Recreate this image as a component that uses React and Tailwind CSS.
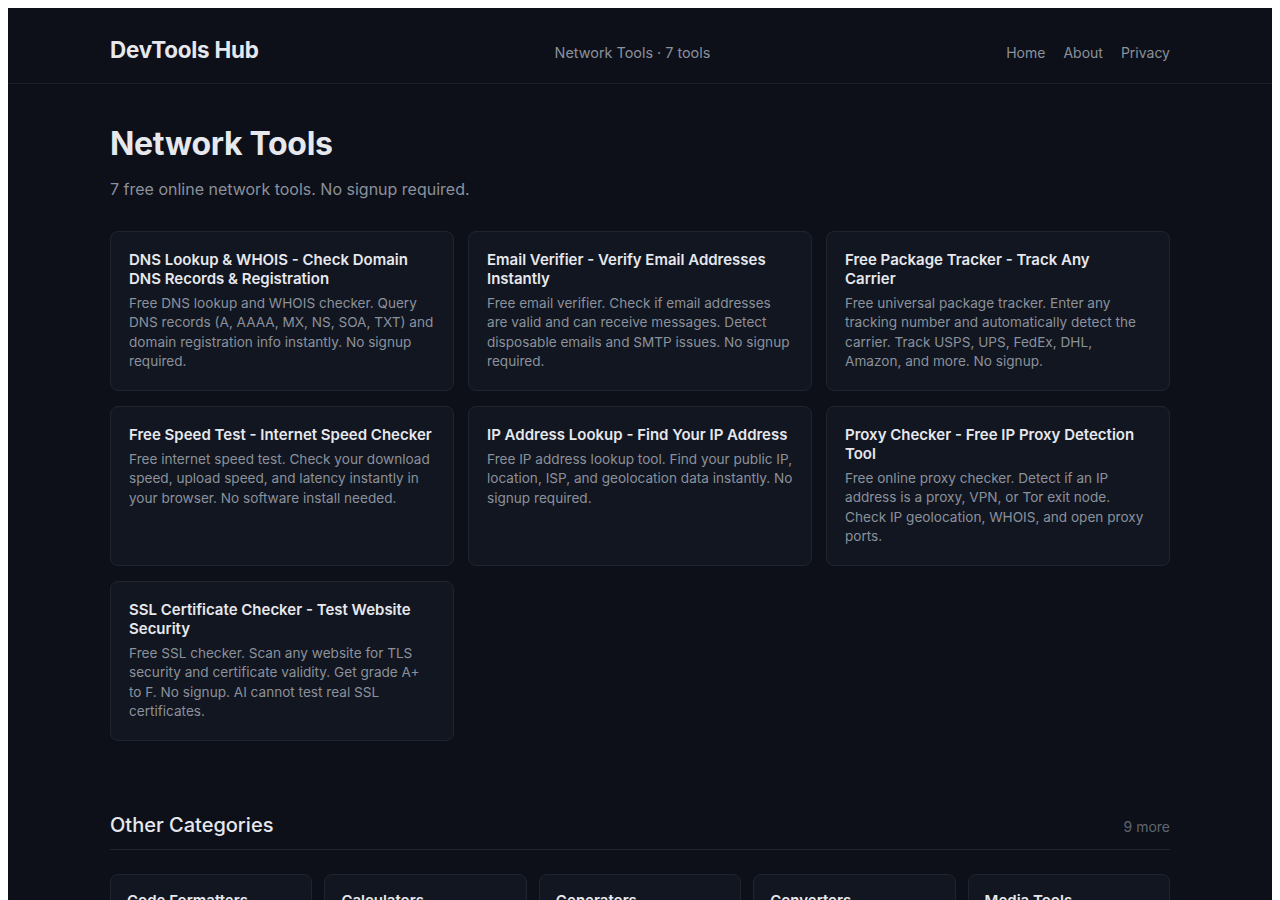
import React from "react";

const tools = [
  {
    t: "DNS Lookup & WHOIS - Check Domain DNS Records & Registration",
    d: "Free DNS lookup and WHOIS checker. Query DNS records (A, AAAA, MX, NS, SOA, TXT) and domain registration info instantly. No signup required.",
  },
  {
    t: "Email Verifier - Verify Email Addresses Instantly",
    d: "Free email verifier. Check if email addresses are valid and can receive messages. Detect disposable emails and SMTP issues. No signup required.",
  },
  {
    t: "Free Package Tracker - Track Any\nCarrier",
    d: "Free universal package tracker. Enter any tracking number and automatically detect the carrier. Track USPS, UPS, FedEx, DHL, Amazon, and more. No signup.",
  },
  {
    t: "Free Speed Test - Internet Speed Checker",
    d: "Free internet speed test. Check your download speed, upload speed, and latency instantly in your browser. No software install needed.",
  },
  {
    t: "IP Address Lookup - Find Your IP Address",
    d: "Free IP address lookup tool. Find your public IP, location, ISP, and geolocation data instantly. No signup required.",
  },
  {
    t: "Proxy Checker - Free IP Proxy Detection Tool",
    d: "Free online proxy checker. Detect if an IP address is a proxy, VPN, or Tor exit node. Check IP geolocation, WHOIS, and open proxy ports.",
  },
  {
    t: "SSL Certificate Checker - Test Website Security",
    d: "Free SSL checker. Scan any website for TLS security and certificate validity. Get grade A+ to F. No signup. AI cannot test real SSL certificates.",
  },
];

const cats = [
  { t: "Code Formatters", d: "12 tools" },
  { t: "Calculators", d: "18 tools" },
  { t: "Generators", d: "15 tools" },
  { t: "Converters", d: "14 tools" },
  { t: "Media Tools", d: "9 tools" },
];

export default function App() {
  return (
    <div
      className="bg-white px-2 pt-2 min-h-screen"
      style={{ fontFamily: "Inter, 'Noto Sans', 'Liberation Sans', sans-serif" }}
    >
      <div className="bg-[#0d1018] min-h-[892px] pb-16">
        <header className="border-b border-[#1b1f29]">
          <div className="max-w-[1100px] mx-auto px-5 pt-[28px] pb-[19px] flex items-baseline justify-between">
            <div className="text-[22.4px] font-bold text-[#e6e8ee] leading-[27px] tracking-[-0.2px]">
              DevTools Hub
            </div>
            <div className="text-[14.4px] text-[#8b919c]">Network Tools · 7 tools</div>
            <nav className="flex gap-[18px] text-[14px] text-[#8b919c]">
              <span>Home</span>
              <span>About</span>
              <span>Privacy</span>
            </nav>
          </div>
        </header>

        <main className="max-w-[1100px] mx-auto px-5 pt-10">
          <h1 className="text-[32px] leading-[38px] font-bold text-[#e6e8ee] tracking-[-0.3px] mt-[1px]">
            Network Tools
          </h1>
          <p className="mt-[14px] text-[16px] leading-6 text-[#8b919c]">
            7 free online network tools. No signup required.
          </p>

          <div className="mt-[30px] grid grid-cols-3 gap-x-[14px] gap-y-[14.6px]">
            {tools.map((x) => (
              <div
                key={x.t}
                className="bg-[#121620] border border-[#20242f] rounded-lg p-[18px]"
              >
                <div className="text-[15px] leading-[19px] font-semibold text-[#e6e8ee] whitespace-pre-line">
                  {x.t}
                </div>
                <div className="mt-[6px] text-[13.6px] leading-[19.6px] text-[#8b919c]">
                  {x.d}
                </div>
              </div>
            ))}
          </div>

          <div className="mt-[70px] flex items-baseline justify-between border-b border-[#20242f] pb-[10px]">
            <h2 className="text-[20px] leading-7 font-medium text-[#e6e8ee]">
              Other Categories
            </h2>
            <span className="text-[14px] text-[#5f6570]">9 more</span>
          </div>

          <div className="mt-6 grid grid-cols-5 gap-3">
            {cats.map((c) => (
              <div
                key={c.t}
                className="bg-[#121620] border border-[#20242f] rounded-lg px-4 pt-4 pb-4"
              >
                <div className="text-[15px] leading-[19px] font-semibold text-[#e6e8ee]">
                  {c.t}
                </div>
                <div className="mt-[6px] text-[13px] text-[#8b919c]">{c.d}</div>
              </div>
            ))}
          </div>
        </main>
      </div>
    </div>
  );
}
